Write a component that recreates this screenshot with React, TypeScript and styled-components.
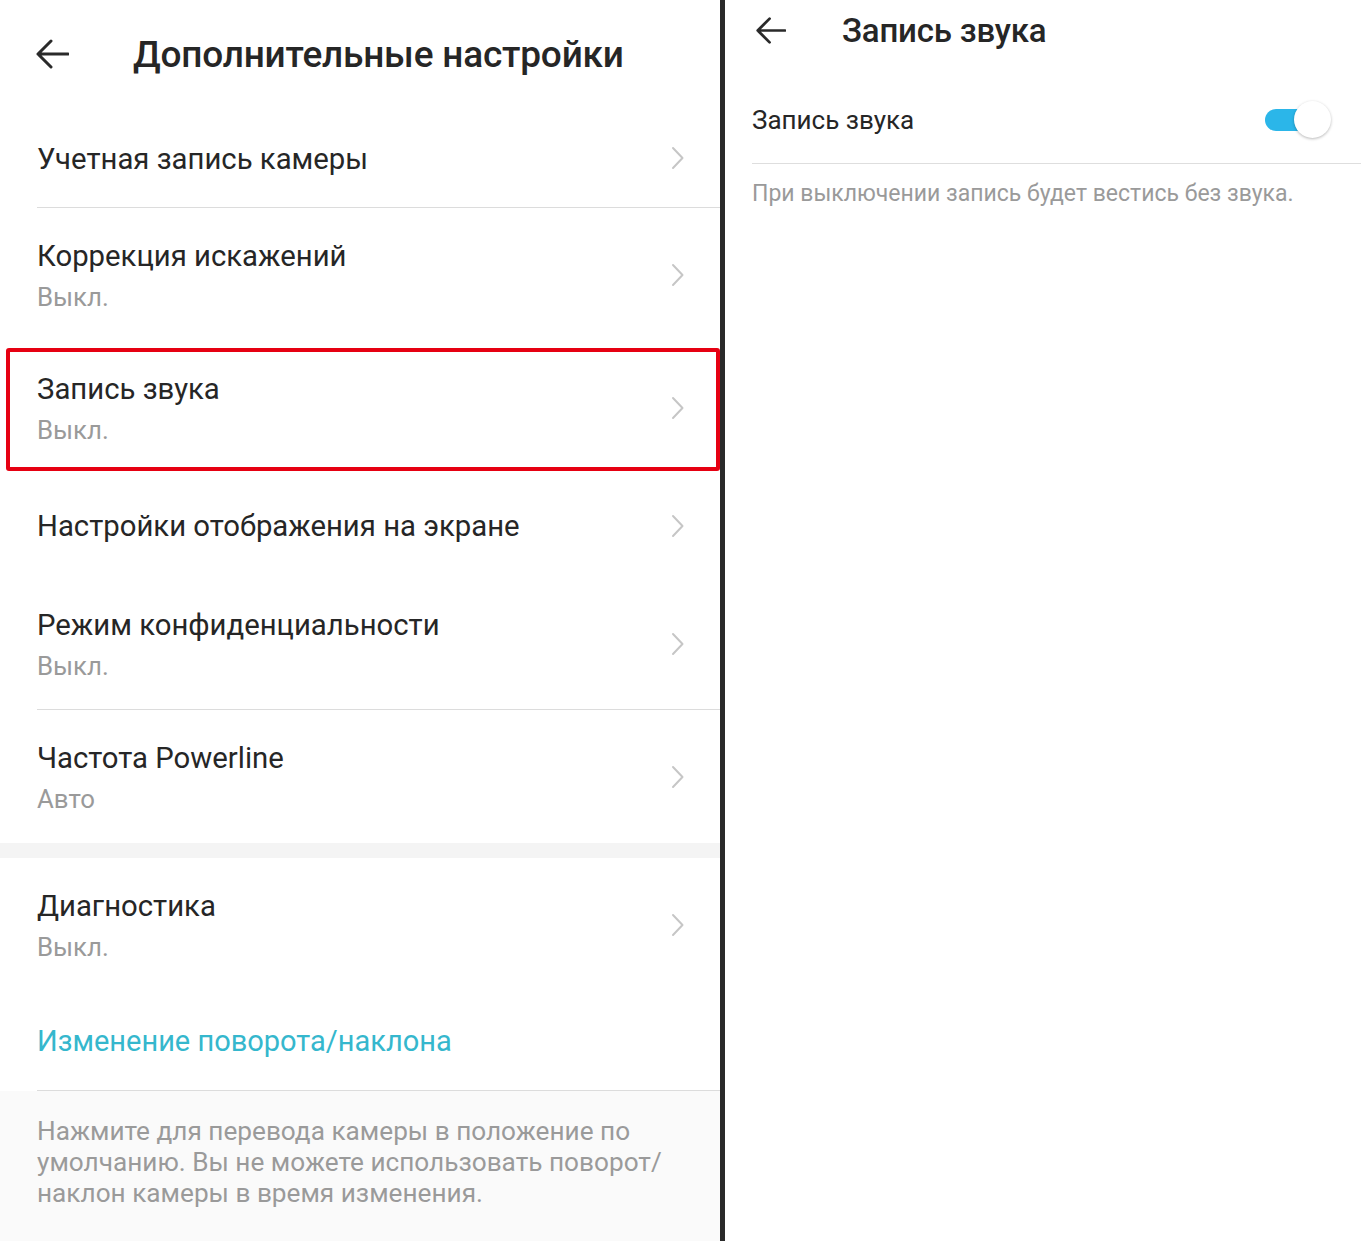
import * as React from "react";
import styled, { createGlobalStyle } from "styled-components";

const GlobalStyle = createGlobalStyle`
  html, body {
    margin: 0;
    padding: 0;
    background: #ffffff;
  }
  body {
    font-family: Roboto, "Noto Sans", "Liberation Sans", sans-serif;
    -webkit-font-smoothing: antialiased;
  }
`;

const SPage = styled.div`
  display: flex;
  width: 1361px;
  height: 1241px;
  overflow: hidden;
  background: #ffffff;
`;

const SLeftPanel = styled.div`
  display: flex;
  flex-direction: column;
  width: 720px;
  flex: 0 0 720px;
  background: #ffffff;
`;

const SSplit = styled.div`
  flex: 0 0 5px;
  background: #2a2a2a;
`;

const SRightPanel = styled.div`
  display: flex;
  flex-direction: column;
  flex: 1 1 auto;
  background: #ffffff;
`;

interface IHeader {
  height: number;
  gap: number;
  indent: number;
}

const SHeader = styled.div<IHeader>`
  display: flex;
  align-items: center;
  height: ${(p) => p.height}px;
  padding-left: ${(p) => p.indent}px;
  gap: ${(p) => p.gap}px;
  flex: 0 0 auto;
`;

interface ITitle {
  size: number;
}

const STitle = styled.div<ITitle>`
  font-size: ${(p) => p.size}px;
  font-weight: 500;
  color: #262626;
  letter-spacing: -0.2px;
`;

const SBack = styled.svg`
  display: block;
  flex: 0 0 auto;
`;

interface IRow {
  height: number;
  divider?: boolean;
}

const SRow = styled.div<IRow>`
  position: relative;
  display: flex;
  align-items: center;
  height: ${(p) => p.height}px;
  padding-left: 37px;
  padding-right: 35px;
  flex: 0 0 auto;
  &::after {
    content: "";
    display: ${(p) => (p.divider ? "block" : "none")};
    position: absolute;
    left: 37px;
    right: 0;
    bottom: 0;
    height: 1px;
    background: #dcdcdc;
  }
`;

const SHighlight = styled.div`
  position: absolute;
  left: 6px;
  right: 0;
  top: 7px;
  bottom: 3px;
  border: 4px solid #e60012;
  border-radius: 3px;
  pointer-events: none;
`;

interface IRowText {
  tall?: boolean;
}

const SRowText = styled.div<IRowText>`
  display: flex;
  flex-direction: column;
  gap: 8px;
  padding-top: ${(p) => (p.tall ? 4 : 2)}px;
  flex: 1 1 auto;
`;

const SRowTitle = styled.div`
  font-size: 29.3px;
  line-height: 33px;
  color: #262626;
`;

const SRowSub = styled.div`
  font-size: 25.8px;
  line-height: 33px;
  color: #9a9a9a;
`;

const SChevron = styled.svg`
  display: block;
  flex: 0 0 auto;
`;

const SBand = styled.div`
  height: 15px;
  flex: 0 0 15px;
  background: #f4f4f4;
`;

const SLinkRow = styled.div`
  display: flex;
  align-items: center;
  height: 100px;
  padding-left: 37px;
  font-size: 29px;
  color: #35b7cd;
  flex: 0 0 auto;
  position: relative;
  &::after {
    content: "";
    position: absolute;
    left: 37px;
    right: 0;
    bottom: 0;
    height: 1px;
    background: #dcdcdc;
  }
`;

const SFooter = styled.div`
  flex: 1 1 auto;
  background: #fafafa;
  padding: 25px 40px 0 37px;
  font-size: 26.2px;
  line-height: 31px;
  color: #9a9a9a;
`;

const SSwitchRow = styled.div`
  display: flex;
  align-items: center;
  justify-content: space-between;
  height: 86px;
  margin: 17px 0 0 27px;
  padding-right: 30px;
  border-bottom: 1px solid #dedede;
  font-size: 26px;
  color: #262626;
`;

const SSwitch = styled.div`
  position: relative;
  width: 66px;
  height: 38px;
`;

const STrack = styled.div`
  position: absolute;
  left: 0;
  top: 8px;
  width: 56px;
  height: 22px;
  border-radius: 11px;
  background: #2bb6e9;
`;

const SKnob = styled.div`
  position: absolute;
  right: 0;
  top: 0;
  width: 37px;
  height: 37px;
  border-radius: 50%;
  background: #ffffff;
  box-shadow: 0 1px 3px rgba(0, 0, 0, 0.28);
`;

const SHint = styled.div`
  padding: 16px 0 0 27px;
  font-size: 23px;
  color: #9a9a9a;
`;

const BackArrow = ({ size }: { size: number }) => (
  <SBack width={size} height={size} viewBox="0 0 34 34">
    <path
      d="M33 17H3M16 4L3 17L16 30"
      fill="none"
      stroke="#2a2a2a"
      strokeWidth="3"
      strokeLinecap="round"
      strokeLinejoin="round"
    />
  </SBack>
);

const Chevron = () => (
  <SChevron width="15" height="24" viewBox="0 0 15 24">
    <path
      d="M3 2L12.5 12L3 22"
      fill="none"
      stroke="#c6c6c6"
      strokeWidth="2"
      strokeLinecap="round"
      strokeLinejoin="round"
    />
  </SChevron>
);

interface IItem {
  title: string;
  sub?: string;
  height?: number;
  divider?: boolean;
  highlight?: boolean;
}

const Item = ({ title, sub, height, divider, highlight }: IItem) => (
  <SRow height={height ?? (sub ? 133 : 103)} divider={divider}>
    <SRowText tall={!!sub}>
      <SRowTitle>{title}</SRowTitle>
      {sub && <SRowSub>{sub}</SRowSub>}
    </SRowText>
    <Chevron />
    {highlight && <SHighlight />}
  </SRow>
);

const App = () => {
  return (
    <>
      <GlobalStyle />
      <SPage>
        <SLeftPanel>
          <SHeader height={108} indent={35} gap={64}>
            <BackArrow size={34} />
            <STitle size={37}>Дополнительные настройки</STitle>
          </SHeader>
          <Item title="Учетная запись камеры" height={100} divider />
          <Item title="Коррекция искажений" sub="Выкл." />
          <Item title="Запись звука" sub="Выкл." highlight />
          <Item title="Настройки отображения на экране" />
          <Item title="Режим конфиденциальности" sub="Выкл." divider />
          <Item title="Частота Powerline" sub="Авто" />
          <SBand />
          <Item title="Диагностика" sub="Выкл." />
          <SLinkRow>Изменение поворота/наклона</SLinkRow>
          <SFooter>
            Нажмите для перевода камеры в положение по умолчанию. Вы не можете
            использовать поворот/ наклон камеры в время изменения.
          </SFooter>
        </SLeftPanel>
        <SSplit />
        <SRightPanel>
          <SHeader height={60} indent={30} gap={56}>
            <BackArrow size={31} />
            <STitle size={33}>Запись звука</STitle>
          </SHeader>
          <SSwitchRow>
            Запись звука
            <SSwitch>
              <STrack />
              <SKnob />
            </SSwitch>
          </SSwitchRow>
          <SHint>При выключении запись будет вестись без звука.</SHint>
        </SRightPanel>
      </SPage>
    </>
  );
};

export default App;
